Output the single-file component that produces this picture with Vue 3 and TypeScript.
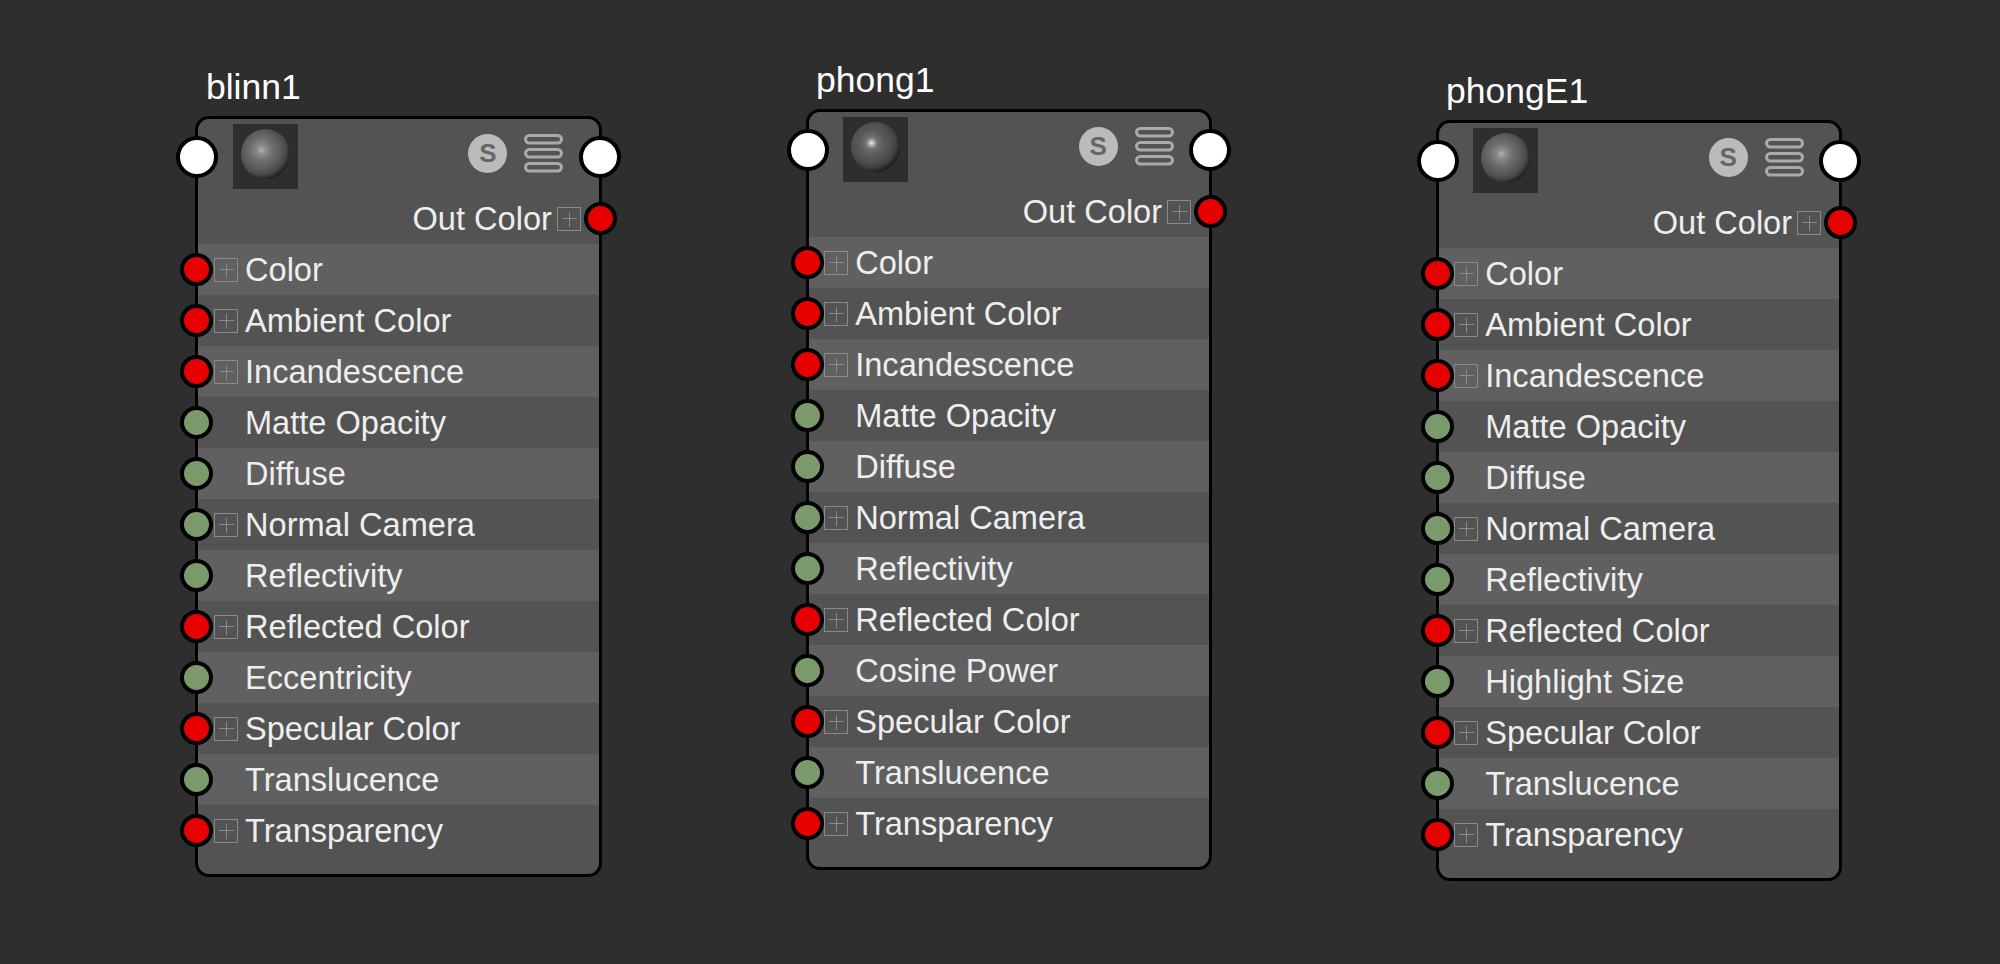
<script setup lang="ts">
// 节点编辑器画布：三个材质节点，属性行数据驱动
type PortKind = "color" | "scalar";

interface Attr {
  label: string;
  kind: PortKind;
  expandable: boolean;
}

interface ShaderNode {
  title: string;
  x: number;
  y: number;
  sphere: "blinn" | "phong";
  attrs: Attr[];
}

const color = (label: string): Attr => ({ label, kind: "color", expandable: true });
const scalar = (label: string): Attr => ({ label, kind: "scalar", expandable: false });
const vector = (label: string): Attr => ({ label, kind: "scalar", expandable: true });

const buildAttrs = (specular: string): Attr[] => [
  color("Color"),
  color("Ambient Color"),
  color("Incandescence"),
  scalar("Matte Opacity"),
  scalar("Diffuse"),
  vector("Normal Camera"),
  scalar("Reflectivity"),
  color("Reflected Color"),
  scalar(specular),
  color("Specular Color"),
  scalar("Translucence"),
  color("Transparency"),
];

const nodes: ShaderNode[] = [
  { title: "blinn1", x: 195.4, y: 58, sphere: "blinn", attrs: buildAttrs("Eccentricity") },
  { title: "phong1", x: 805.6, y: 51, sphere: "phong", attrs: buildAttrs("Cosine Power") },
  { title: "phongE1", x: 1435.6, y: 62, sphere: "blinn", attrs: buildAttrs("Highlight Size") },
];
</script>

<template>
  <main class="canvas">
    <section
      v-for="node in nodes"
      :key="node.title"
      class="node"
      :style="{ left: `${node.x}px`, top: `${node.y}px` }"
    >
      <h2 class="node-title">{{ node.title }}</h2>
      <div class="card">
        <span class="port port--main port--left"></span>
        <span class="port port--main port--right"></span>

        <header class="card-head">
          <div class="thumb">
            <div class="sphere" :class="`sphere--${node.sphere}`"></div>
          </div>
          <span class="badge">S</span>
          <svg class="layers" viewBox="0 0 39 39" aria-hidden="true">
            <rect x="1.5" y="1.5" width="36" height="7.5" rx="3.75" />
            <rect x="1.5" y="15.5" width="36" height="7.5" rx="3.75" />
            <rect x="1.5" y="29.5" width="36" height="7.5" rx="3.75" />
          </svg>
        </header>

        <div class="row row--out">
          <span class="label">Out Color</span>
          <span class="plus"></span>
          <span class="port port--color port--out"></span>
        </div>

        <div
          v-for="attr in node.attrs"
          :key="attr.label"
          class="row"
        >
          <span class="port port--in" :class="`port--${attr.kind}`"></span>
          <span class="plus" :class="{ 'plus--none': !attr.expandable }"></span>
          <span class="label">{{ attr.label }}</span>
        </div>
      </div>
    </section>
  </main>
</template>

<style>
body {
  margin: 0;
  background: #2e2e2e;
}
</style>

<style scoped>
.canvas {
  position: relative;
  width: 2000px;
  height: 964px;
  overflow: hidden;
  background: #2e2e2e;
  font-family: "Liberation Sans", Arial, sans-serif;
  color: #eee;
}

.node {
  position: absolute;
  width: 406.5px;
}

.node-title {
  margin: 0 0 0 10.5px;
  height: 58px;
  font-size: 35.5px;
  font-weight: 400;
  line-height: 58px;
  color: #fff;
}

.card {
  position: relative;
  box-sizing: border-box;
  height: 761px;
  border: 3px solid #000;
  border-radius: 14px;
  background: #535353;
}

.card-head {
  display: flex;
  align-items: flex-start;
  height: 74px;
  padding: 5px 35.5px 0 34.5px;
  box-sizing: border-box;
}

.thumb {
  display: flex;
  align-items: center;
  justify-content: center;
  width: 65px;
  height: 65px;
  margin-right: auto;
  background: #2e2e2e;
}

.sphere {
  width: 49px;
  height: 50px;
  margin-top: -5px;
  border-radius: 50%;
}

.sphere--blinn {
  background: radial-gradient(circle at 42% 42%, #b4b4b4 0, #8e8e8e 10%, #6e6e6e 28%, #5a5a5a 47%, #4a4a4a 60%, #161616 76%);
}

.sphere--phong {
  background: radial-gradient(circle at 42% 42%, #f6f6f6 0, #b0b0b0 6%, #707070 15%, #5a5a5a 30%, #505050 47%, #414141 60%, #151515 76%);
}

.badge {
  width: 39px;
  height: 39px;
  margin: 10px 17px 0 0;
  border-radius: 50%;
  background: #bbb;
  color: #666;
  font-size: 26px;
  font-weight: 700;
  line-height: 39px;
  text-align: center;
}

.layers {
  width: 39px;
  height: 39px;
  margin-top: 10px;
  fill: none;
  stroke: #aaa;
  stroke-width: 3;
}

.row {
  position: relative;
  display: flex;
  align-items: center;
  gap: 7px;
  height: 51px;
  padding-left: 15.6px;
  font-size: 32.6px;
}

.row:nth-of-type(even) {
  background: #606060;
}

.row--out {
  justify-content: flex-end;
  padding: 0 18px 0 0;
  gap: 5px;
  background: none;
}

.label {
  white-space: nowrap;
}

.plus {
  position: relative;
  flex: none;
  box-sizing: border-box;
  width: 24px;
  height: 24px;
  border: 1px solid #8a8a8a;
}

.plus::before,
.plus::after {
  content: "";
  position: absolute;
  background: #8a8a8a;
}

.plus::before {
  left: 4px;
  right: 3px;
  top: 10px;
  height: 1px;
}

.plus::after {
  top: 4px;
  bottom: 3px;
  left: 11px;
  width: 1px;
}

.plus--none {
  visibility: hidden;
}

.port {
  position: absolute;
  box-sizing: border-box;
  border: 4px solid #000;
  border-radius: 50%;
}

.port--main {
  top: 17px;
  width: 42px;
  height: 42px;
  background: #fff;
}

.port--left {
  left: -22px;
}

.port--right {
  right: -22px;
}

.port--in,
.port--out {
  top: 9px;
  width: 33px;
  height: 33px;
}

.port--in {
  left: -18px;
}

.port--out {
  right: -18px;
}

.port--color {
  background: #e60000;
}

.port--scalar {
  background: #7a9a6c;
}
</style>
